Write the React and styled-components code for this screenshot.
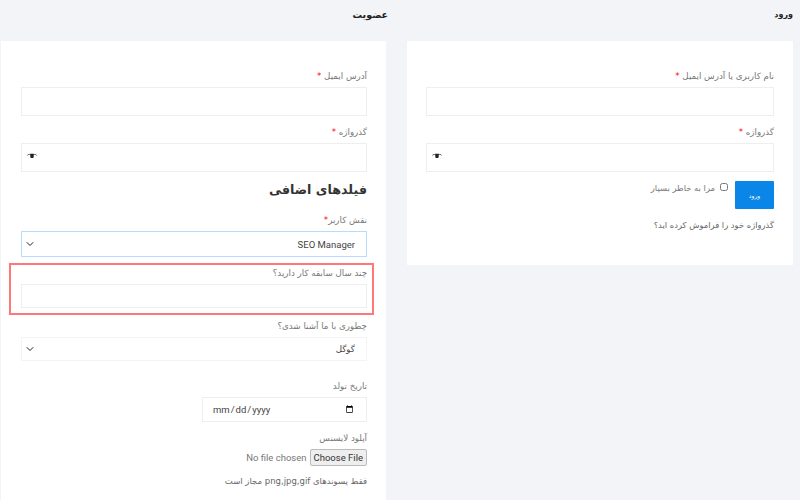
import React from 'react';
import styled, { createGlobalStyle } from 'styled-components';
import { ChevronDown } from 'lucide-react';

const GlobalStyle = createGlobalStyle`
  html, body {
    margin: 0;
    height: 500px;
    overflow: hidden;
    background: #f2f4f8;
    font-family: "DejaVu Sans", "Liberation Sans", sans-serif;
  }
`;

const Page = styled.div`
  direction: rtl;
  display: grid;
  grid-template-columns: 386px 385px;
  gap: 21px;
  padding: 0 7px 0 1px;
  height: 500px;
  overflow: hidden;
  box-sizing: border-box;
`;

const Column = styled.section`
  display: flex;
  flex-direction: column;
  align-items: stretch;
`;

const Heading = styled.h2`
  margin: 0 ${p => p.$inset}px 0 0;
  height: 41px;
  padding-top: 8px;
  box-sizing: border-box;
  font-size: ${p => p.$size}px;
  line-height: 14px;
  font-weight: bold;
  color: #222;
`;

const Card = styled.div`
  background: #fff;
  padding: 28px 19px 0 ${p => p.$left}px;
  box-sizing: border-box;
  height: ${p => p.$height};
`;

const Label = styled.label`
  display: block;
  font-size: 8.7px;
  line-height: 14px;
  height: 14px;
  color: #777;
  margin-bottom: ${p => p.$gap ?? 4}px;
`;

const Star = styled.span`
  color: #f00;
`;

const Field = styled.div`
  margin-bottom: ${p => p.$gap ?? 9}px;
`;

const Text = styled.input`
  display: block;
  width: 100%;
  height: ${p => p.$height ?? 29}px;
  box-sizing: border-box;
  border: 1px solid #eeeeee;
  background: #fff;
  outline: none;
`;

const PasswordWrap = styled.div`
  position: relative;
`;

const Eye = styled.svg`
  position: absolute;
  left: 6px;
  top: 10px;
  width: 10px;
  height: 5px;
`;

const LoginRow = styled.div`
  display: flex;
  align-items: flex-start;
  margin-top: 9px;
`;

const Submit = styled.button`
  width: 39px;
  height: 28px;
  padding: 0;
  border: 0;
  border-radius: 1px;
  background: #0a86e8;
  color: #fff;
  font: inherit;
  font-size: 6px;
`;

const Remember = styled.label`
  display: flex;
  align-items: flex-start;
  gap: 5px;
  margin-right: 7px;
  font-size: 8.4px;
  line-height: 14px;
  color: #777;
`;

const Check = styled.input`
  width: 8px;
  height: 8px;
  margin: 2px 0 0;
`;

const Forgot = styled.a`
  display: block;
  margin-top: 9px;
  font-size: 8.4px;
  line-height: 14px;
  color: #666;
`;

const SectionTitle = styled.h3`
  margin: 0 0 12px;
  height: 22px;
  font-size: 12.7px;
  line-height: 22px;
  font-weight: bold;
  color: #333;
`;

const SelectWrap = styled.div`
  position: relative;
`;

const Arrow = styled(ChevronDown)`
  position: absolute;
  left: 3px;
  top: 50%;
  margin-top: -6px;
  width: 12px;
  height: 12px;
  color: #222;
  pointer-events: none;
`;

const Select = styled.select`
  display: block;
  width: 100%;
  height: ${p => p.$height}px;
  box-sizing: border-box;
  padding: 0 11px 0 0;
  appearance: none;
  background: #fff;
  border: ${p => (p.$focused ? '1px solid #b8dcfb' : '1px solid #f4f4f4')};
  outline: none;
  border-radius: 0;
  font-family: Roboto, "DejaVu Sans", sans-serif;
  font-size: ${p => p.$size}px;
  color: #444;
`;

const Highlight = styled.div`
  margin: 6px -7px 4px -12px;
  padding: 1px 5px 0 10px;
  height: 52px;
  box-sizing: border-box;
  border: 2px solid #f77;
`;

const DateInput = styled.input`
  display: block;
  width: 165px;
  height: 25px;
  box-sizing: border-box;
  border: 1px solid #eee;
  padding: 0 10px 0 9px;
  background: #fff;
  font-family: Roboto, sans-serif;
  font-size: 9.5px;
  color: #444;
  outline: none;
`;

const FileInput = styled.input`
  display: block;
  width: 125px;
  height: 18px;
  font-family: Roboto, sans-serif;
  font-size: 9.5px;
  color: #777;

  &::file-selector-button {
    height: 17px;
    padding: 0 3px;
    margin: 0 0 0 3px;
    font: inherit;
    color: #333;
    background: #eeeeee;
    border: 1px solid #bbb;
    border-radius: 2px;
  }
`;

const Hint = styled.p`
  margin: 6px 0 0;
  font-size: 8.5px;
  line-height: 14px;
  color: #666;
`;

function EyeIcon() {
  return (
    <Eye viewBox="0 0 10 5">
      <path d="M0 2.2C2.5.3 7.5.3 10 2.2L9.4 2.5C8.4 1.8 7.4 1.6 6.8 1.5L6.6 4.4C6 5.2 4 5.2 3.4 4.4L3.2 1.5C2.6 1.6 1.6 1.8.6 2.5Z" fill="#222" />
    </Eye>
  );
}

function Password() {
  return (
    <PasswordWrap>
      <Text type="password" />
      <EyeIcon />
    </PasswordWrap>
  );
}

function Dropdown({ children, ...rest }) {
  return (
    <SelectWrap>
      <Select {...rest}>{children}</Select>
      <Arrow strokeWidth={2} />
    </SelectWrap>
  );
}

export default function App() {
  return (
    <Page>
      <GlobalStyle />
      <Column>
        <Heading $inset={0} $size={8}>ورود</Heading>
        <Card $left={19} $height="224px">
          <Field>
            <Label>نام کاربری یا آدرس ایمیل <Star>*</Star></Label>
            <Text type="text" />
          </Field>
          <Field>
            <Label>گذرواژه <Star>*</Star></Label>
            <Password />
          </Field>
          <LoginRow>
            <Submit type="button">ورود</Submit>
            <Remember><Check type="checkbox" />مرا به خاطر بسپار</Remember>
          </LoginRow>
          <Forgot>گذرواژه خود را فراموش کرده اید؟</Forgot>
        </Card>
      </Column>
      <Column>
        <Heading $inset={-2} $size={9.5}>عضویت</Heading>
        <Card $left={20} $height="459px">
          <Field>
            <Label>آدرس ایمیل <Star>*</Star></Label>
            <Text type="text" />
          </Field>
          <Field $gap={7}>
            <Label>گذرواژه <Star>*</Star></Label>
            <Password />
          </Field>
          <SectionTitle>فیلدهای اضافی</SectionTitle>
          <Label>نقش کاربر<Star>*</Star></Label>
          <Dropdown $height={26} $size={9.5} $focused defaultValue="seo">
            <option value="seo">SEO Manager</option>
          </Dropdown>
          <Highlight>
            <Label $gap={4}>چند سال سابقه کار دارید؟</Label>
            <Text type="text" $height={24} />
          </Highlight>
          <Field $gap={18}>
            <Label $gap={4}>چطوری با ما آشنا شدی؟</Label>
            <Dropdown $height={24} $size={8.7} defaultValue="google">
              <option value="google">گوگل</option>
            </Dropdown>
          </Field>
          <Field $gap={9}>
            <Label $gap={4}>تاریخ تولد</Label>
            <DateInput type="date" />
          </Field>
          <Field $gap={7}>
            <Label $gap={4}>آپلود لایسنس</Label>
            <FileInput type="file" />
          </Field>
          <Hint>فقط پسوندهای png,jpg,gif مجاز است</Hint>
        </Card>
      </Column>
    </Page>
  );
}
